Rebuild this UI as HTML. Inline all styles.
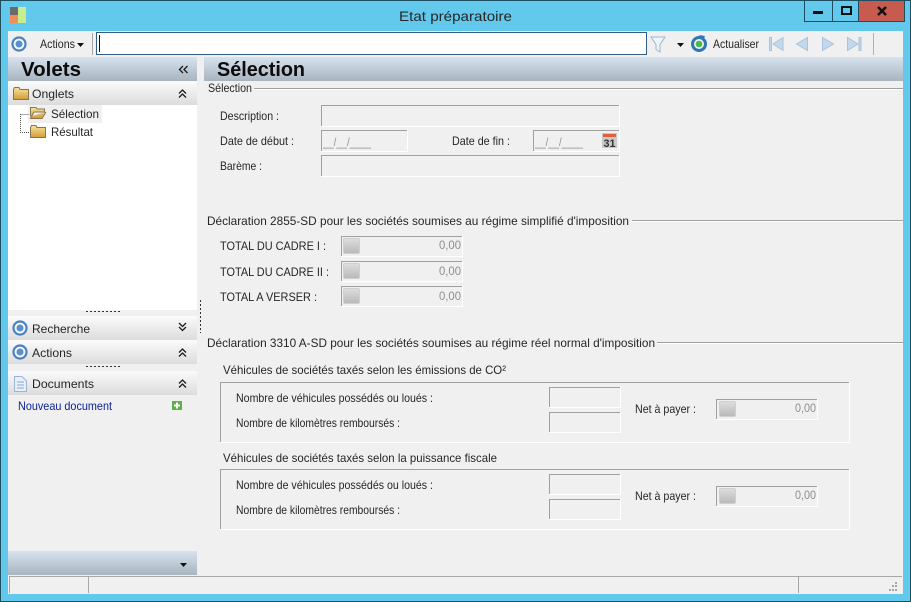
<!DOCTYPE html>
<html lang="fr"><head><meta charset="utf-8"><title>Etat préparatoire</title>
<style>
html,body{margin:0;padding:0;width:911px;height:602px;overflow:hidden;background:#63c9ec}
svg{display:block}
text{font-family:"Liberation Sans",Arial,sans-serif;font-size:12px;fill:#262626}
.b{font-weight:bold;font-size:20px;fill:#0c0c0c}
.g{fill:#8f8f8f}
</style></head><body>
<svg width="911" height="602" viewBox="0 0 911 602" xmlns="http://www.w3.org/2000/svg">
<defs>
<linearGradient id="hb" x1="0" y1="0" x2="0" y2="1"><stop offset="0" stop-color="#d6e2ee"/><stop offset="1" stop-color="#a8b4be"/></linearGradient>
<linearGradient id="hw" x1="0" y1="0" x2="0" y2="1"><stop offset="0" stop-color="#fbfbfb"/><stop offset="1" stop-color="#dcdcdc"/></linearGradient>
<linearGradient id="btn" x1="0" y1="0" x2="0" y2="1"><stop offset="0" stop-color="#dedede"/><stop offset="1" stop-color="#b8b8b8"/></linearGradient>
<linearGradient id="fold" x1="0" y1="0" x2="0" y2="1"><stop offset="0" stop-color="#f7e4a0"/><stop offset="1" stop-color="#d29c38"/></linearGradient>
<g id="dd"><path d="M0 3.500 3.500 0 7 3.500M0 7.500 3.500 4 7 7.500" fill="none" stroke="#1a1a1a" stroke-width="1.300"/></g>
<g id="du"><path d="M0 0 3.500 3.500 7 0M0 4 3.500 7.500 7 4" fill="none" stroke="#1a1a1a" stroke-width="1.300"/></g>
<g id="ring"><circle cx="8" cy="8" r="6.500" fill="#f4f7fb" stroke="#4a82c0" stroke-width="2.200"/><circle cx="8" cy="8" r="3.500" fill="#5a90cc"/></g>
<g id="folder"><path d="M.5 3.500V13.500H15.500V3.500H7L6 1.500H1.500Z" fill="url(#fold)" stroke="#86754e"/></g>
<g id="btnf"><rect x=".5" y=".5" width="16" height="15" rx="1.500" fill="url(#btn)" stroke="#cfcfcf"/></g>
</defs>

<!-- window frame -->
<rect width="911" height="602" fill="#1d4e62"/>
<rect x="1" y="1" width="909" height="600" fill="#63c9ec"/>
<rect x="8" y="31" width="895" height="563" fill="#f0f0f0"/>

<!-- title bar -->
<rect x="10" y="7" width="8" height="8" fill="#6b6b6b"/>
<rect x="10" y="15" width="8" height="8" fill="#f08e5a"/>
<rect x="18" y="7" width="8" height="16" fill="#c6ee8e"/>
<text x="399" y="21" style="font-size:14px" textLength="113" lengthAdjust="spacingAndGlyphs">Etat préparatoire</text>
<path d="M804.500 0V21.500H904.500V0M832.500 0V21.500M858.500 0V21.500" fill="none" stroke="#1d4e62"/>
<rect x="859" y="1" width="45" height="20" fill="#c75b50"/>
<rect x="813" y="11" width="10" height="3" fill="#111"/>
<rect x="842" y="7" width="9" height="7" fill="none" stroke="#111" stroke-width="2"/>
<path d="M878 7 886 15M886 7 878 15" stroke="#111" stroke-width="2.500"/>

<!-- toolbar -->
<use href="#ring" x="11" y="36"/>
<text x="40" y="48" textLength="35" lengthAdjust="spacingAndGlyphs">Actions</text>
<path d="M77 43H84L80.500 47Z" fill="#111"/>
<rect x="92" y="33" width="1" height="22" fill="#a8a8a8"/>
<rect x="96.500" y="32.500" width="550" height="22" fill="#fff" stroke="#2f5f86"/>
<rect x="99" y="35" width="1" height="17" fill="#111"/>
<path d="M651 37H665L660 44.500V52L656 49.500V44.500Z" fill="#eef4f8" stroke="#9db6c8"/>
<path d="M677 43H684L680.500 47Z" fill="#111"/>
<circle cx="699" cy="44" r="6.500" fill="none" stroke="#2f78b4" stroke-width="3"/>
<circle cx="699" cy="44" r="3.300" fill="#4fb848"/>
<path d="M699 35 705 36 703 41Z" fill="#2f78b4"/>
<text x="713" y="48" textLength="46" lengthAdjust="spacingAndGlyphs">Actualiser</text>
<g fill="#c4d8ec" stroke="#a9c3dc">
<rect x="769.500" y="37.500" width="2" height="13"/><path d="M783 37.500V50.500L773 44Z"/>
<path d="M807.500 37.500V50.500L796.500 44Z"/>
<path d="M822.500 37.500V50.500L833.500 44Z"/>
<path d="M847.500 37.500V50.500L858 44Z"/><rect x="859" y="37.500" width="2" height="13"/>
</g>
<rect x="873" y="33" width="1" height="22" fill="#b0b0b0"/>

<!-- headers -->
<rect x="8" y="57" width="189" height="24" fill="url(#hb)"/>
<rect x="204" y="57" width="699" height="24" fill="url(#hb)"/>
<text class="b" x="21" y="76" textLength="60" lengthAdjust="spacingAndGlyphs">Volets</text>
<text class="b" x="217" y="76" textLength="88" lengthAdjust="spacingAndGlyphs">Sélection</text>
<path d="M183 66 179.500 69.500 183 73M187.500 66 184 69.500 187.500 73" fill="none" stroke="#1a1a1a" stroke-width="1.300"/>

<!-- Sidebar -->
<rect x="8" y="105" width="189" height="205" fill="#fff"/>
<rect x="8" y="81" width="189" height="24" fill="url(#hw)"/>
<use href="#folder" x="13" y="86"/>
<text x="32" y="98" textLength="42" lengthAdjust="spacingAndGlyphs">Onglets</text>
<use href="#dd" x="179" y="90"/>
<rect x="28" y="105" width="74" height="18" fill="#f0f0f0"/>
<path d="M20.500 114V132.500H29M20.500 114.500H29" fill="none" stroke="#555" stroke-dasharray="1 1"/>
<path d="M30.500 116.500V107.500H36L37 109H44.500V112H34L30.500 118.500H42L46 112" fill="url(#fold)" stroke="#86754e"/>
<text x="51" y="118" textLength="48" lengthAdjust="spacingAndGlyphs">Sélection</text>
<use href="#folder" x="30" y="124"/>
<text x="51" y="136" textLength="42" lengthAdjust="spacingAndGlyphs">Résultat</text>
<path d="M86 311.500H120M86 366.500H120" stroke="#333" stroke-dasharray="2 2"/>
<path d="M200.500 300V333" stroke="#333" stroke-dasharray="2 2"/>
<rect x="8" y="316" width="189" height="24" fill="url(#hw)"/>
<use href="#ring" x="12" y="320"/>
<text x="32" y="333" textLength="58" lengthAdjust="spacingAndGlyphs">Recherche</text>
<use href="#du" x="179" y="323"/>
<rect x="8" y="340" width="189" height="24" fill="url(#hw)"/>
<use href="#ring" x="12" y="344"/>
<text x="32" y="357" textLength="40" lengthAdjust="spacingAndGlyphs">Actions</text>
<use href="#dd" x="179" y="349"/>
<rect x="8" y="371" width="189" height="24" fill="url(#hw)"/>
<path d="M14.500 376.500H22L26.500 381V391.500H14.500Z" fill="#e8effa" stroke="#9eb4d4"/>
<path d="M17 382H24M17 385H24M17 388H24" stroke="#8ea8cc"/>
<text x="32" y="388" textLength="62" lengthAdjust="spacingAndGlyphs">Documents</text>
<use href="#dd" x="179" y="380"/>
<text x="18" y="410" textLength="94" lengthAdjust="spacingAndGlyphs" style="fill:#0a1f96">Nouveau document</text>
<rect x="172" y="401" width="10" height="9" fill="#5db04a"/>
<path d="M177 402.500V408.500M174 405.500H180" stroke="#fff" stroke-width="2"/>
<rect x="8" y="551" width="189" height="24" fill="url(#hb)"/>
<path d="M180 563H187L183.500 567Z" fill="#111"/>

<!-- Selection group -->
<text x="208" y="92" textLength="44" lengthAdjust="spacingAndGlyphs">Sélection</text>
<path d="M254 88.500H903" stroke="#a0a0a0"/><path d="M254 89.500H903" stroke="#fff"/>
<text x="220" y="120" textLength="59" lengthAdjust="spacingAndGlyphs">Description :</text>
<text x="220" y="145" textLength="74" lengthAdjust="spacingAndGlyphs">Date de début :</text>
<text x="452" y="145" textLength="58" lengthAdjust="spacingAndGlyphs">Date de fin :</text>
<text x="220" y="170" textLength="42" lengthAdjust="spacingAndGlyphs">Barème :</text>
<g fill="none">
<path d="M321.500 127V105.500H620" stroke="#a0a0a0"/><path d="M321 126.500H619.500V105" stroke="#fff"/>
<path d="M321.500 152V130.500H408" stroke="#a0a0a0"/><path d="M321 151.500H407.500V130" stroke="#fff"/>
<path d="M533.500 152V130.500H620" stroke="#a0a0a0"/><path d="M533 151.500H619.500V130" stroke="#fff"/>
<path d="M321.500 177V155.500H620" stroke="#a0a0a0"/><path d="M321 176.500H619.500V155" stroke="#fff"/>
</g>
<text x="323" y="146" class="g" textLength="48" lengthAdjust="spacingAndGlyphs">__/__/____</text>
<text x="535" y="146" class="g" textLength="48" lengthAdjust="spacingAndGlyphs">__/__/____</text>
<rect x="602" y="133" width="15" height="15" fill="#c9c9c9"/>
<rect x="603" y="134" width="13" height="3" fill="#e0603a"/>
<text x="603.500" y="147" style="font-size:11px;font-weight:bold;fill:#333" textLength="12" lengthAdjust="spacingAndGlyphs">31</text>

<!-- 2855 -->
<text x="207" y="225" textLength="422" lengthAdjust="spacingAndGlyphs">Déclaration 2855-SD pour les sociétés soumises au régime simplifié d'imposition</text>
<path d="M632 220.500H903" stroke="#a0a0a0"/><path d="M632 221.500H903" stroke="#fff"/>
<text x="220" y="250" textLength="106" lengthAdjust="spacingAndGlyphs">TOTAL DU CADRE I :</text>
<text x="220" y="276" textLength="109" lengthAdjust="spacingAndGlyphs">TOTAL DU CADRE II :</text>
<text x="220" y="301" textLength="97" lengthAdjust="spacingAndGlyphs">TOTAL A VERSER :</text>
<g fill="none">
<path d="M341.500 257V236.500H463" stroke="#a0a0a0"/><path d="M341 256.500H462.500V236" stroke="#fff"/>
<path d="M341.500 282V261.500H463" stroke="#a0a0a0"/><path d="M341 281.500H462.500V261" stroke="#fff"/>
<path d="M341.500 307V286.500H463" stroke="#a0a0a0"/><path d="M341 306.500H462.500V286" stroke="#fff"/>
</g>
<use href="#btnf" x="343" y="238"/><use href="#btnf" x="343" y="263"/><use href="#btnf" x="343" y="288"/>
<text x="439" y="249" class="g" textLength="22" lengthAdjust="spacingAndGlyphs">0,00</text>
<text x="439" y="275" class="g" textLength="22" lengthAdjust="spacingAndGlyphs">0,00</text>
<text x="439" y="300" class="g" textLength="22" lengthAdjust="spacingAndGlyphs">0,00</text>

<!-- 3310 -->
<text x="207" y="347" textLength="448" lengthAdjust="spacingAndGlyphs">Déclaration 3310 A-SD pour les sociétés soumises au régime réel normal d'imposition</text>
<path d="M657 342.500H903" stroke="#a0a0a0"/><path d="M657 343.500H903" stroke="#fff"/>

<text x="223" y="374" textLength="283" lengthAdjust="spacingAndGlyphs">Véhicules de sociétés taxés selon les émissions de CO²</text>
<path d="M220.500 443V382.500H849.500" fill="none" stroke="#a0a0a0"/><path d="M220 442.500H849.500V382" fill="none" stroke="#fff"/>
<text x="236" y="402" textLength="197" lengthAdjust="spacingAndGlyphs">Nombre de véhicules possédés ou loués :</text>
<text x="236" y="427" textLength="164" lengthAdjust="spacingAndGlyphs">Nombre de kilomètres remboursés :</text>
<g fill="none">
<path d="M549.500 408V387.500H621" stroke="#a0a0a0"/><path d="M549 407.500H620.500V387" stroke="#fff"/>
<path d="M549.500 433V412.500H621" stroke="#a0a0a0"/><path d="M549 432.500H620.500V412" stroke="#fff"/>
<path d="M716.500 420V399.500H817" stroke="#a0a0a0"/><path d="M716 419.500H817.500V399" stroke="#fff"/>
</g>
<text x="635" y="413" textLength="61" lengthAdjust="spacingAndGlyphs">Net à payer :</text>
<use href="#btnf" x="719" y="401"/>
<text x="795" y="412" class="g" textLength="21" lengthAdjust="spacingAndGlyphs">0,00</text>

<text x="223" y="462" textLength="274" lengthAdjust="spacingAndGlyphs">Véhicules de sociétés taxés selon la puissance fiscale</text>
<path d="M220.500 530V469.500H849.500" fill="none" stroke="#a0a0a0"/><path d="M220 529.500H849.500V469" fill="none" stroke="#fff"/>
<text x="236" y="489" textLength="197" lengthAdjust="spacingAndGlyphs">Nombre de véhicules possédés ou loués :</text>
<text x="236" y="514" textLength="164" lengthAdjust="spacingAndGlyphs">Nombre de kilomètres remboursés :</text>
<g fill="none">
<path d="M549.500 495V474.500H621" stroke="#a0a0a0"/><path d="M549 494.500H620.500V474" stroke="#fff"/>
<path d="M549.500 520V499.500H621" stroke="#a0a0a0"/><path d="M549 519.500H620.500V499" stroke="#fff"/>
<path d="M716.500 507V486.500H817" stroke="#a0a0a0"/><path d="M716 506.500H817.500V486" stroke="#fff"/>
</g>
<text x="635" y="500" textLength="61" lengthAdjust="spacingAndGlyphs">Net à payer :</text>
<use href="#btnf" x="719" y="488"/>
<text x="795" y="499" class="g" textLength="21" lengthAdjust="spacingAndGlyphs">0,00</text>

<!-- status bar -->
<path d="M9 576.500H902M9.500 576V593M88.500 576V593M798.500 576V593" stroke="#a8a8a8" fill="none"/>
<g fill="#a8a8a8">
<rect x="895" y="582" width="2" height="2"/><rect x="892" y="585" width="2" height="2"/><rect x="895" y="585" width="2" height="2"/>
<rect x="889" y="589" width="2" height="2"/><rect x="892" y="589" width="2" height="2"/><rect x="895" y="589" width="2" height="2"/>
</g>
</svg>
</body></html>
